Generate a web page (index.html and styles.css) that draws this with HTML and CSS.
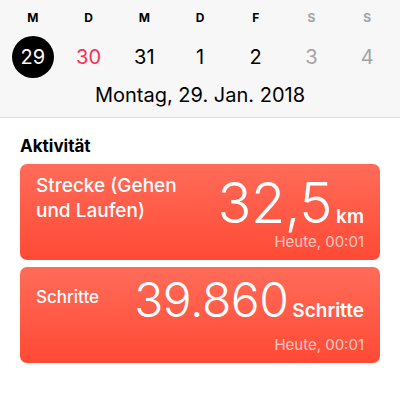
FILE: index.html
```html
<!DOCTYPE html>
<html lang="de">
<head>
    <meta charset="UTF-8">
    <meta name="viewport" content="width=device-width, initial-scale=1.0">
    <title>Aktivität</title>
    <link rel="stylesheet" href="styles.css">
</head>
<body>
    <div class="week">
        <div class="week-days">
            <span>M</span>
            <span>D</span>
            <span>M</span>
            <span>D</span>
            <span>F</span>
            <span class="weekend">S</span>
            <span class="weekend">S</span>
        </div>
        <div class="week-dates">
            <span class="date selected">29</span>
            <span class="date today">30</span>
            <span class="date">31</span>
            <span class="date">1</span>
            <span class="date">2</span>
            <span class="date weekend">3</span>
            <span class="date weekend">4</span>
        </div>
        <div class="week-title">Montag, 29. Jan. 2018</div>
    </div>

    <div class="section">
        <h2 class="section-title">Aktivität</h2>

        <div class="card">
            <div class="card-row">
                <div class="card-title">Strecke (Gehen<br>und Laufen)</div>
                <div class="card-value">
                    <span class="number big">32,5</span><span class="unit">km</span>
                </div>
            </div>
            <div class="card-time">Heute, 00:01</div>
        </div>

        <div class="card">
            <div class="card-row">
                <div class="card-title small">Schritte</div>
                <div class="card-value">
                    <span class="number">39.860</span><span class="unit">Schritte</span>
                </div>
            </div>
            <div class="card-time">Heute, 00:01</div>
        </div>
    </div>
</body>
</html>
```

FILE: styles.css
```css
* {
    margin: 0;
    padding: 0;
    box-sizing: border-box;
}

body {
    font-family: Inter, "Noto Sans", sans-serif;
    background-color: #fff;
    color: #000;
}

/* Cabecera con la semana */
.week {
    height: 118px;
    background-color: #f7f7f7;
    border-bottom: 1px solid #dcdcdc;
    padding: 11px 5px 0;
}

.week-days,
.week-dates {
    display: grid;
    grid-template-columns: repeat(7, 1fr);
    justify-items: center;
    align-items: center;
}

.week-days span {
    font-size: 12px;
    font-weight: 700;
    line-height: 14px;
}

.week-dates {
    margin-top: 11px;
}

.date {
    width: 42px;
    height: 42px;
    border-radius: 50%;
    display: flex;
    justify-content: center;
    align-items: center;
    font-size: 20px;
}

.date.selected {
    background-color: #000;
    color: #fff;
}

.date.today {
    color: #ff2d55;
}

.weekend {
    color: #a3a3a3;
}

.week-title {
    text-align: center;
    font-size: 20px;
    line-height: 24px;
    margin-top: 5px;
}

/* Actividad */
.section {
    padding: 17px 20px 0;
}

.section-title {
    font-size: 17px;
    font-weight: 700;
    line-height: 22px;
    margin-bottom: 7px;
}

.card {
    height: 96px;
    border-radius: 7px;
    background: linear-gradient(to bottom, #ff6c59, #ff4a35);
    color: #fff;
    padding: 9px 16px 0;
    margin-bottom: 7px;
    display: flex;
    flex-direction: column;
}

.card-row {
    display: flex;
    justify-content: space-between;
    align-items: flex-start;
}

.card-title {
    font-size: 19px;
    font-weight: 500;
    line-height: 25px;
}

.card-title.small {
    font-size: 17px;
    margin-top: 9px;
}

.card-value {
    display: flex;
    align-items: baseline;
    gap: 4px;
    line-height: 1;
}

.number {
    font-weight: 300;
    font-size: 48px;
    line-height: 48px;
    letter-spacing: -0.5px;
}

.number.big {
    font-size: 56px;
    line-height: 52px;
    margin-top: 4px;
}

.unit {
    font-size: 19px;
    font-weight: 600;
}

.card-time {
    text-align: right;
    font-size: 15px;
    line-height: 18px;
    color: rgba(255, 255, 255, 0.7);
    margin-top: auto;
    margin-bottom: 9px;
}
```
